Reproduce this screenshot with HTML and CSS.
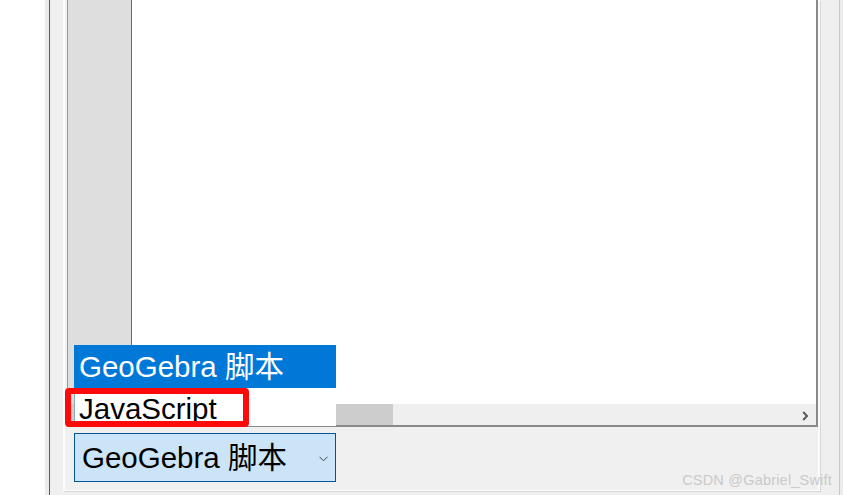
FILE: index.html
```html
<!DOCTYPE html>
<html lang="zh">
<head>
<meta charset="utf-8">
<title>GeoGebra 脚本</title>
<link rel="stylesheet" href="styles.css">
</head>
<body>
<div class="app">
  <div class="gutter"></div>
  <div class="frame">
    <div class="frame-inner">
      <div class="dialog">
        <div class="editor">
          <div class="editor-body">
            <div class="line-col"></div>
            <div class="text-area"></div>
          </div>
          <div class="hscroll">
            <div class="hscroll-thumb"></div>
            <div class="hscroll-track"></div>
            <svg class="hscroll-arrow" width="7" height="10" viewBox="0 0 7 10"><path d="M1.2 1 L5 5 L1.2 9" fill="none" stroke="#5a5a5a" stroke-width="2"/></svg>
          </div>
        </div>
        <div class="select">
          <span class="select-text">GeoGebra 脚本</span>
          <svg class="select-chevron" width="9" height="6" viewBox="0 0 9 6"><path d="M0.5 0.8 L4.5 4.8 L8.5 0.8" fill="none" stroke="#404040" stroke-width="1"/></svg>
        </div>
      </div>
    </div>
  </div>
</div>
<div class="popup">
  <div class="popup-item selected">GeoGebra 脚本</div>
  <div class="popup-item plain">JavaScript</div>
</div>
<div class="highlight"></div>
<div class="watermark">CSDN @Gabriel_Swift</div>
</body>
</html>
```

FILE: styles.css
```css
* { box-sizing: border-box; }
html, body {
  margin: 0;
  padding: 0;
  width: 843px;
  height: 495px;
  overflow: hidden;
  background: #ffffff;
  font-family: "Liberation Sans", "Noto Sans CJK SC", sans-serif;
}
.app {
  display: flex;
  height: 495px;
}
.gutter {
  width: 45px;
  background: #ffffff;
}
.frame {
  flex: 1;
  display: flex;
  background: #ececec;
  padding-left: 4px;
  padding-right: 3px;
}
.frame-inner {
  flex: 1;
  display: flex;
  align-items: flex-start;
  background: #efefef;
  border-left: 1px solid #5a5a5a;
  border-right: 1px solid #c8c8c8;
  padding-left: 13px;
}
.dialog {
  width: 757px;
  display: flex;
  flex-direction: column;
  border-left: 2px solid #fcfcfc;
  border-right: 2px solid #fcfcfc;
  border-bottom: 1px solid #fcfcfc;
  box-shadow: 1px 1px 0 #d6d6d6;
  padding-left: 2px;
  padding-bottom: 8px;
  background: #f0f0f0;
}
.editor {
  width: 751px;
  border-left: 1px solid #9a9a9a;
  border-right: 2px solid #8a8a8a;
  border-bottom: 2px solid #8a8a8a;
  display: flex;
  flex-direction: column;
}
.editor-body {
  display: flex;
  height: 404px;
}
.line-col {
  width: 64px;
  background: #dedede;
  border-right: 1px solid #6b6b6b;
}
.text-area {
  flex: 1;
  background: #ffffff;
}
.hscroll {
  height: 21px;
  display: flex;
  align-items: center;
  background: #efefef;
}
.hscroll-thumb {
  width: 325px;
  height: 21px;
  background: #cdcdcd;
}
.hscroll-track {
  flex: 1;
}
.hscroll-arrow {
  display: block;
  margin-right: 7px;
  margin-top: 2px;
}
.select {
  margin-top: 6px;
  margin-left: 7px;
  width: 262px;
  height: 49px;
  background: #cce4f7;
  border: 1px solid #005499;
  display: flex;
  align-items: center;
  justify-content: space-between;
  padding-left: 7px;
  padding-right: 7px;
}
.select-text {
  font-size: 29.5px;
  line-height: 47px;
  color: #000000;
  white-space: nowrap;
}
.select-chevron {
  display: block;
  margin-top: 2px;
}
.popup {
  position: absolute;
  left: 74px;
  top: 345px;
  width: 262px;
  display: flex;
  flex-direction: column;
  font-size: 29.5px;
  white-space: nowrap;
}
.popup-item {
  padding-left: 5px;
}
.popup-item.selected {
  height: 43px;
  line-height: 43px;
  background: #0078d7;
  color: #ffffff;
}
.popup-item.plain {
  height: 38px;
  padding-top: 3px;
  line-height: 35px;
  background: #ffffff;
  color: #000000;
  border-left: 1px solid #8fa8c4;
  padding-left: 4px;
}
.highlight {
  position: absolute;
  left: 65px;
  top: 388px;
  width: 184px;
  height: 39px;
  border: 6px solid #ff0a0a;
  border-radius: 4px;
}
.watermark {
  position: absolute;
  right: 11px;
  top: 471px;
  font-size: 14.5px;
  line-height: 18px;
  color: #cacaca;
  letter-spacing: 0.2px;
  white-space: nowrap;
}
```
